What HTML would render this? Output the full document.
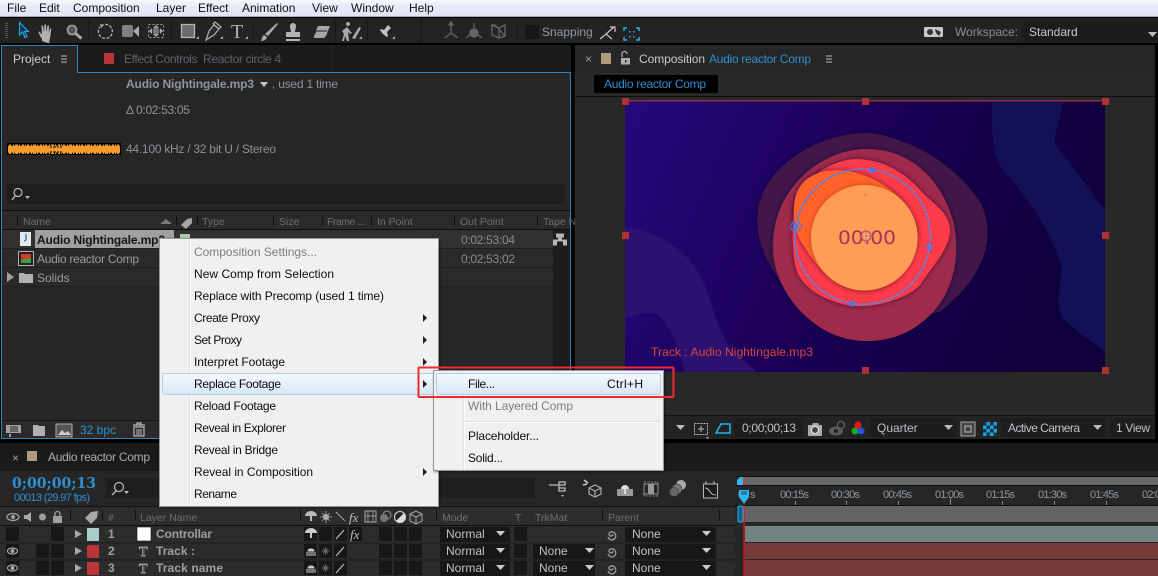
<!DOCTYPE html>
<html><head><meta charset="utf-8"><title>After Effects</title>
<style>
html,body{margin:0;padding:0;background:#000;width:1158px;height:576px;overflow:hidden}
svg{display:block}
text{font-family:"Liberation Sans",sans-serif;font-size:12px;white-space:pre}
.m{fill:#0c0c14;font-size:12px}
.d{fill:#7d7d7d}
.g{fill:#8c8c8c;font-size:11.5px}
.h{fill:#6f6f6f;font-size:10.5px}
.b{fill:#2f8fd0}
.l{fill:#bdbdbd}
.n{font-weight:bold;fill:#98a0a6;font-size:12px}
.r{fill:#8f979e;font-size:10.5px}
.ic{fill:#a8a8a8}
.st{fill:none;stroke:#a8a8a8;stroke-width:1.3}
</style></head><body>
<svg width="1158" height="576" viewBox="0 0 1158 576" xmlns="http://www.w3.org/2000/svg">
<defs>
<linearGradient id="mb" x1="0" y1="0" x2="0" y2="1"><stop offset="0" stop-color="#f8f9fc"/><stop offset=".3" stop-color="#e9ecf6"/><stop offset="1" stop-color="#dfe4f2"/></linearGradient>
<linearGradient id="bg" x1="0" y1="0" x2="1" y2=".25"><stop offset="0" stop-color="#26097c"/><stop offset=".5" stop-color="#1c0058"/><stop offset="1" stop-color="#0f003c"/></linearGradient>
<linearGradient id="hl" x1="0" y1="0" x2="0" y2="1"><stop offset="0" stop-color="#f6f9fd"/><stop offset="1" stop-color="#d6e6f7"/></linearGradient>
<filter id="s1" x="-20%" y="-20%" width="140%" height="140%"><feDropShadow dx="0" dy="0" stdDeviation="8" flood-color="#14002a" flood-opacity=".6"/></filter>
<filter id="s2" x="-20%" y="-20%" width="140%" height="140%"><feDropShadow dx="0" dy="0" stdDeviation="7" flood-color="#a02a10" flood-opacity=".6"/></filter>
<filter id="ms" x="-5%" y="-5%" width="110%" height="110%"><feDropShadow dx="1" dy="1" stdDeviation="1" flood-color="#000" flood-opacity=".5"/></filter>
</defs>

<rect width="1158" height="576" fill="#000"/>
<!-- menubar -->
<rect width="1158" height="17" fill="url(#mb)"/>
<rect y="16" width="1158" height="1" fill="#a9adbb"/>
<g fill="#101018">
<text x="7" y="12">File</text><text x="39" y="12">Edit</text><text x="73" y="12">Composition</text><text x="156" y="12">Layer</text><text x="198" y="12">Effect</text><text x="242" y="12">Animation</text><text x="312" y="12">View</text><text x="351" y="12">Window</text><text x="409" y="12">Help</text>
</g>

<!-- toolbar -->
<rect y="18" width="1158" height="25" fill="#232323"/>
<g fill="#555"><rect x="5" y="23" width="3" height="1"/><rect x="5" y="25" width="3" height="1"/><rect x="5" y="27" width="3" height="1"/><rect x="5" y="29" width="3" height="1"/><rect x="5" y="31" width="3" height="1"/><rect x="5" y="33" width="3" height="1"/><rect x="5" y="35" width="3" height="1"/><rect x="5" y="37" width="3" height="1"/></g>
<path d="M19.500 22.500V35l3-3 2.500 5.500 2-1-2.500-5h4z" fill="#12364e" stroke="#22a5e6" stroke-width="1.200"/>
<path d="M42 41v-2l-2-3-1.500-4 1-.5 2.500 3-.5-9h1.500l1 7 .5-8h1.500l.5 8 1-7h1.500l-.200 8 1.200-5h1.300l-1 8-1 5v2z" fill="#b3b3b3"/>
<circle cx="72" cy="30" r="4.500" fill="#555" stroke="#9a9a9a" stroke-width="1.800"/><path d="M75.500 33.500l6 5" stroke="#a5a5a5" stroke-width="3"/>
<path d="M101 26a7 7 0 1 1-1 1" fill="none" stroke="#aaa" stroke-width="1.400" stroke-dasharray="3 1.500"/><path d="M100 24l4 1-3 3z" fill="#aaa"/>
<rect x="122" y="25" width="11" height="12" rx="2" fill="#808080"/><path d="M133 31l6-5v11z" fill="#aaa"/>
<rect x="148.500" y="24.500" width="15" height="13" fill="none" stroke="#aaa" stroke-dasharray="2 2"/><path d="M156 25l3 3h-6zM156 37l3-3h-6zM149 31l3-3v6zM163 31l-3-3v6z" fill="#aaa"/><circle cx="156" cy="31" r="3.500" fill="#777"/>
<rect x="181.500" y="24.500" width="13" height="13" fill="#6c6c6c" stroke="#b5b5b5" stroke-width="1.300"/><path d="M196 39h3v-3z" fill="#aaa"/>
<path d="M206 40l3-9 5-6 5 4-5 6zM213 24l2-2 6 5-2 2z" fill="#2a2a2a" stroke="#b0b0b0" stroke-width="1.200"/><path d="M220 39h3v-3z" fill="#aaa"/>
<text x="231" y="38" style="font-family:'Liberation Serif',serif;font-size:20px;fill:#b0b0b0">T</text><path d="M245 39h3v-3z" fill="#aaa"/>
<path d="M261 41c3 0 5-1 6-4l-3-2c-2 1-2 4-3 6zM265 34l12-11 1 1-10 12z" fill="#a8a8a8"/>
<path d="M290 26a3 3 0 0 1 6 0c0 3-1 4-1 6h5v5h-14v-5h5c0-2-1-3-1-6zM286 39h14v2h-14z" fill="#b3b3b3"/>
<path d="M313 37l5-11h12l-4 10-2 2h-9z" fill="#a5a5a5"/><path d="M313 37l3-6h11" stroke="#232323" fill="none"/>
<circle cx="348" cy="24" r="2" fill="#aaa"/><path d="M342 41l2-7-2-3 5-4 3 4 2 2-2 1-2-2 1 9h-2l-2-5-1 5z" fill="#aaa"/><path d="M352 38l7-11 2 1-6 11z" fill="#aaa"/><path d="M359 39h3v-3z" fill="#aaa"/>
<path d="M379 40l4-6-3-4 1-1 3 1 4-5 3 3-4 4 1 4-1 1-4-3z" fill="#c2c2c2"/><path d="M392 39h3v-3z" fill="#aaa"/>
<g fill="#232323"><rect x="88" y="20" width="1" height="22" fill="#161616"/><rect x="171" y="20" width="1" height="22" fill="#161616"/><rect x="253" y="20" width="1" height="22" fill="#161616"/><rect x="335" y="20" width="1" height="22" fill="#161616"/><rect x="367" y="20" width="1" height="22" fill="#161616"/><rect x="420" y="18" width="2" height="25" fill="#1a1a1a"/><rect x="517" y="20" width="1" height="22" fill="#161616"/></g>
<g stroke="#666" fill="none" stroke-width="1.300"><path d="M451 23v10l-6 5M451 33l7 5"/><path d="M451 22l-2 3h4z" fill="#666"/><path d="M474 23v5M466 38l4-3M482 38l-4-3"/><circle cx="474" cy="33" r="4" fill="#666"/><path d="M492 25h3l10 11M492 25v10l7 3 6-2v-11l-6 3-7-3zM499 28v10"/></g>
<rect x="525" y="25" width="14" height="14" fill="#161616"/>
<text x="542" y="36" fill="#8f9aa5">Snapping</text>
<path d="M600 39l6-5 6 5M606 34l8-7M610 27h5v5" fill="none" stroke="#c8c8c8" stroke-width="1.200"/>
<path d="M624 31v-3h3M636 28h3v3M639 37v3h-3M627 40h-3v-3" fill="none" stroke="#28b0ea" stroke-width="1.500"/><g fill="#28b0ea"><rect x="629" y="31" width="1.500" height="1.500"/><rect x="633" y="31" width="1.500" height="1.500"/><rect x="629" y="36" width="1.500" height="1.500"/><rect x="633" y="36" width="1.500" height="1.500"/></g>
<rect x="924" y="27" width="19" height="10" rx="1" fill="#c8c8c8"/><circle cx="930" cy="32" r="3" fill="#333"/><path d="M935 29l6 3-2 4-3-3z" fill="#333"/>
<text x="955" y="36" fill="#8e8e8e">Workspace:</text>
<rect x="1022" y="22" width="136" height="20" fill="#1c1c1c"/>
<text x="1029" y="36" fill="#c8c8c8">Standard</text>
<path d="M1148 32h9l-4.500 5z" fill="#bbb"/>

<!-- Project panel -->
<rect x="1" y="45" width="570" height="394" fill="#262626"/>
<rect x="1" y="45" width="570" height="27" fill="#1b1b1b"/>
<rect x="331" y="45" width="1" height="27" fill="#222"/>
<rect x="2" y="45" width="76" height="28" fill="#262626"/>
<path d="M1.500 73V50.500h0V45.500H77.500V72.500H570.500V438.500H1.500V73" fill="none" stroke="#2c84ba"/>
<text x="13" y="63" fill="#c8ced4">Project</text>
<path d="M61 59h6M61 62h6M61 65h6" transform="translate(0 -3)" stroke="#c0c0c0" fill="none"/>
<rect x="104" y="53" width="10" height="11" fill="#b93538"/>
<text x="124" y="63" fill="#5e646a" textLength="157">Effect Controls  Reactor circle 4</text>
<text x="126" y="88" style="font-weight:bold;fill:#8f959c" textLength="128">Audio Nightingale.mp3</text>
<path d="M260 82h8l-4 5z" fill="#c8c8c8"/>
<text x="272" y="88" fill="#8d939a" textLength="66">, used 1 time</text>
<text x="126" y="114" fill="#8d939a" textLength="64">Δ 0:02:53:05</text>
<rect x="7" y="143" width="114" height="12" fill="#000"/>
<rect x="8" y="144.500" width="112" height="9.500" fill="#f49b2f"/>
<path d="M8 145H120M8 153.500H120" stroke="#000" stroke-width="1.500" stroke-dasharray="1 2 2 1 1 3 1 1 2 2 1 1"/>
<path d="M50 147h12M50 152h12" stroke="#000" stroke-width="1" stroke-dasharray="2 1 3 1"/>
<text x="126" y="153" fill="#8d939a" textLength="150">44.100 kHz / 32 bit U / Stereo</text>
<rect x="7" y="184" width="558" height="20" fill="#1e1e1e"/>
<circle cx="18" cy="192.500" r="4" fill="none" stroke="#bbb" stroke-width="1.200"/><path d="M15 196l-3 4" stroke="#bbb" stroke-width="1.300"/><path d="M25 196h5l-2.500 3z" fill="#bbb"/>
<rect x="2" y="210" width="568" height="1" fill="#0e0e0e"/>
<rect x="2" y="211" width="568" height="18" fill="#2a2a2a"/>
<rect x="2" y="229" width="568" height="1" fill="#0e0e0e"/>
<g fill="#111"><rect x="17" y="215" width="1" height="11"/><rect x="176" y="215" width="1" height="11"/><rect x="197" y="215" width="1" height="11"/><rect x="273" y="215" width="1" height="11"/><rect x="322" y="215" width="1" height="11"/><rect x="371" y="215" width="1" height="11"/><rect x="454" y="215" width="1" height="11"/><rect x="537" y="215" width="1" height="11"/></g>
<text x="23" y="225" class="h">Name</text><path d="M160 224l6-5 6 5z" fill="#7c7c7c"/>
<path d="M181 225l6-6 5-1v5l-6 6z" fill="#a6a6a6"/>
<text x="202" y="225" class="h">Type</text><text x="279" y="225" class="h">Size</text><text x="327" y="225" class="h" textLength="38">Frame ...</text><text x="377" y="225" class="h">In Point</text><text x="460" y="225" class="h">Out Point</text><text x="543" y="225" class="h">Tape N</text>
<rect x="2" y="230" width="568" height="18" fill="#313131"/>
<rect x="2" y="249" width="568" height="18" fill="#2a2a2a"/>
<rect x="2" y="268" width="568" height="18" fill="#2a2a2a"/>
<rect x="2" y="248" width="568" height="1" fill="#1e1e1e"/><rect x="2" y="267" width="568" height="1" fill="#1e1e1e"/><rect x="2" y="286" width="568" height="1" fill="#1e1e1e"/>
<rect x="553" y="230" width="17" height="208" fill="#1c1c1c"/>
<rect x="35" y="230" width="139" height="18" fill="#a0a0a0"/>
<rect x="20" y="232" width="11" height="14" fill="#e8e8e8"/><path d="M26 234v6l-2 1" stroke="#2487d8" stroke-width="1.500" fill="none"/>
<text x="37" y="244" style="font-weight:bold;fill:#141414" textLength="128">Audio Nightingale.mp3</text>
<rect x="18.500" y="251.500" width="15" height="14" fill="#222" stroke="#b0b0b0"/><rect x="21" y="254" width="10" height="9" fill="#3aa04a"/><path d="M21 254h10v4l-10 2z" fill="#d23b2a"/>
<text x="37" y="263" fill="#9c9c9c" textLength="102">Audio reactor Comp</text>
<path d="M7 272l7 5-7 5z" fill="#a0a0a0"/>
<path d="M19 273h5l1 1h8v9H19z" fill="#b0b0b0"/>
<text x="37" y="282" fill="#9c9c9c">Solids</text>
<rect x="180" y="234" width="10" height="10" fill="#a8cba8"/>
<text x="461" y="244" fill="#8b8b8b" textLength="54">0:02:53:04</text>
<text x="461" y="263" fill="#8b8b8b" textLength="54">0;02;53;02</text>
<path d="M559 233h5v4h-2v2h5v6h-4v-4h-6v4h-4v-6h5v-2h-2v-4z" fill="#b5b5b5" transform="translate(0 .5)"/>
<rect x="2" y="420" width="568" height="1" fill="#141414"/>
<rect x="2" y="421" width="551" height="17" fill="#2a2a2a"/>
<path d="M6 425h15v8H6zM9 434h2v3H9z" fill="#a0a0a0"/><path d="M10 427h8M10 429h8M10 431h8" stroke="#2a2a2a"/>
<path d="M33 425h5l1 1h6v10H33z" fill="#b0b0b0"/>
<rect x="56" y="424" width="16" height="13" fill="#555" stroke="#aaa"/><path d="M58 435l4-5 3 3 3-2 3 4z" fill="#ccc"/>
<text x="80" y="434" class="b">32 bpc</text>
<path d="M133 425h12M137 425v-2h4v2M134 427h10v9h-10z" fill="none" stroke="#bbb" stroke-width="1.200"/><path d="M137 429v6M139 429v6M141 429v6" stroke="#bbb"/>

<!-- Comp panel -->
<rect x="575" y="45" width="580" height="394" fill="#282828"/>
<rect x="575" y="45" width="580" height="27" fill="#262626"/>
<text x="585" y="63" fill="#9b9b9b">×</text>
<rect x="601" y="53" width="10" height="11" fill="#ad9b7b"/>
<path d="M622 57v-3a2.500 2.500 0 0 1 5 0" fill="none" stroke="#b0b0b0" stroke-width="1.300"/><rect x="621" y="58" width="9" height="6.500" fill="#b0b0b0"/><rect x="625" y="60" width="1.500" height="2.500" fill="#282828"/>
<text x="639" y="63" fill="#c6cbd0" textLength="66">Composition</text>
<text x="709" y="63" class="b" textLength="102">Audio reactor Comp</text>
<path d="M826 56h6M826 59h6M826 62h6" stroke="#c0c0c0" fill="none"/>
<rect x="594" y="75" width="124" height="18" fill="#000"/>
<text x="604" y="88" class="b" textLength="102">Audio reactor Comp</text>
<rect x="575" y="96" width="580" height="1" fill="#0c0c0c"/>

<!-- comp image -->
<rect x="625" y="101" width="480" height="271" fill="url(#bg)"/>
<g transform="translate(620 95) scale(.33333)">
<path d="M1115 18C1115 100 1115 180 1150 225C1230 320 1290 400 1325 520C1320 600 1300 650 1340 680C1380 720 1420 740 1455 770V345L1340 190C1310 160 1300 140 1305 125L1330 18Z" fill="#141056"/>
<path d="M15 395C100 410 190 450 240 540C280 620 280 690 340 770L410 830H195C175 740 130 650 90 652C60 655 35 665 15 668Z" fill="#2c1170"/>
<path d="M740 113C860 125 1000 200 1080 320C1130 420 1100 540 960 650L700 720L500 590C440 500 412 450 412 370C410 250 550 120 740 113Z" fill="#43164a" filter="url(#s1)"/>
<path d="M735 162C860 160 960 240 1000 380C1030 520 980 640 880 700C800 750 680 755 590 690C490 620 450 510 460 430C470 280 600 165 735 162Z" fill="#a02c4b" filter="url(#s1)"/>
<path d="M710 192C800 195 860 240 900 285C940 330 990 350 990 410C985 470 930 520 900 570C860 610 770 640 690 632C620 620 540 580 525 510C515 450 515 350 530 310C560 240 640 195 710 192Z" fill="#fe3a4a" filter="url(#s1)"/>
<path d="M640 226C740 222 860 290 890 400C900 480 840 585 735 587C660 590 590 520 550 450C520 410 518 350 525 310C540 250 590 228 640 226Z" fill="#ff622c" filter="url(#s1)"/>
<ellipse cx="733" cy="428" rx="160" ry="158" fill="#ff9c56" filter="url(#s2)"/>
<rect x="736" y="297" width="2" height="5" fill="#a5345a"/>
<ellipse cx="728" cy="425" rx="203" ry="203" fill="none" stroke="#5a80e2" stroke-width="4"/>
<circle cx="757" cy="225" r="9" fill="#4f78e0"/><circle cx="928" cy="456" r="9" fill="#4f78e0"/><circle cx="697" cy="626" r="9" fill="#4f78e0"/><circle cx="527" cy="395" r="9" fill="#4f78e0"/><circle cx="527" cy="395" r="15" fill="none" stroke="#4f78e0" stroke-width="3"/>
</g>
<text x="838" y="244" style="font-size:19px;fill:#a5345a;font-family:'DejaVu Sans',sans-serif" textLength="58" lengthAdjust="spacingAndGlyphs">00:00</text>
<circle cx="866" cy="236" r="5" fill="none" stroke="#b8405e"/><circle cx="866" cy="236" r="2" fill="none" stroke="#e8d8c8"/><path d="M866 228v16M858 236h16" stroke="#c87a70"/>
<text x="651" y="356" fill="#d4463c" textLength="162" lengthAdjust="spacingAndGlyphs">Track : Audio Nightingale.mp3</text>
<rect x="625" y="100" width="480" height="1.500" fill="#8c2f3c"/>
<g fill="#ae3232"><rect x="622" y="98" width="7" height="7"/><rect x="862" y="98" width="7" height="7"/><rect x="1102" y="98" width="7" height="7"/><rect x="622" y="232" width="7" height="7"/><rect x="1102" y="232" width="7" height="7"/><rect x="862" y="367" width="7" height="7"/><rect x="1102" y="367" width="7" height="7"/></g>

<!-- Comp footer -->
<rect x="575" y="415" width="580" height="1" fill="#111"/>
<rect x="575" y="416" width="580" height="23" fill="#232323"/>
<path d="M676 425h9l-4.500 5z" fill="#bbb"/>
<rect x="694.500" y="423.500" width="13" height="11" fill="none" stroke="#bbb" stroke-dasharray="2 1"/><path d="M701 426v6M698 429h6" stroke="#bbb"/><path d="M706 437h3l-1.500 2z" fill="#bbb"/>
<path d="M716 433l5-9h9v9z" fill="none" stroke="#28b0ea" stroke-width="1.500"/>
<rect x="734" y="418" width="69" height="19" fill="#1d1d1d"/>
<text x="742" y="432" fill="#bcc2c8" textLength="54">0;00;00;13</text>
<path d="M808 425h4l1-2h5l1 2h3v11h-14z" fill="#ababab"/><circle cx="815" cy="430" r="3.500" fill="#444" stroke="#eee"/>
<ellipse cx="836" cy="431" rx="7" ry="4.500" fill="#5a5a5a"/><circle cx="836" cy="431" r="2" fill="#222"/><circle cx="841" cy="425" r="3.500" fill="none" stroke="#5a5a5a" stroke-width="1.500"/>
<circle cx="858" cy="425" r="3.500" fill="#e01818"/><circle cx="855" cy="431" r="3.500" fill="#1aa81a"/><circle cx="861" cy="431" r="3.500" fill="#2a50e0"/>
<rect x="870" y="418" width="87" height="19" fill="#1d1d1d"/>
<text x="877" y="432" fill="#bcc2c8">Quarter</text><path d="M944 425h9l-4.500 5z" fill="#bbb"/>
<rect x="961" y="422" width="14" height="14" fill="#444" stroke="#aaa"/><rect x="965" y="426" width="6" height="6" fill="none" stroke="#bbb"/>
<rect x="983" y="422" width="14" height="14" fill="#1f9fd8"/><g fill="#14384a"><rect x="983" y="422" width="3.500" height="3.500"/><rect x="990" y="422" width="3.500" height="3.500"/><rect x="986.500" y="425.500" width="3.500" height="3.500"/><rect x="993.500" y="425.500" width="3.500" height="3.500"/><rect x="983" y="429" width="3.500" height="3.500"/><rect x="990" y="429" width="3.500" height="3.500"/><rect x="986.500" y="432.500" width="3.500" height="3.500"/><rect x="993.500" y="432.500" width="3.500" height="3.500"/></g>
<rect x="1001" y="418" width="104" height="19" fill="#1d1d1d"/>
<text x="1008" y="432" fill="#bcc2c8" textLength="72">Active Camera</text><path d="M1093 425h9l-4.500 5z" fill="#bbb"/>
<rect x="1110" y="418" width="43" height="19" fill="#1d1d1d"/>
<text x="1116" y="432" fill="#bcc2c8" textLength="34">1 View</text>

<!-- Timeline panel -->
<rect x="0" y="443" width="1158" height="28" fill="#1a1a1a"/>
<rect x="0" y="471" width="1158" height="105" fill="#262626"/>
<text x="12" y="462" fill="#9b9b9b">×</text>
<rect x="27" y="451" width="10" height="10" fill="#ad9b7b"/>
<text x="48" y="461" fill="#a8aeb4" textLength="102">Audio reactor Comp</text>
<text x="12" y="488" style="font-family:'DejaVu Serif',serif;font-weight:bold;font-size:15px;fill:#2f8fd0" textLength="84" lengthAdjust="spacingAndGlyphs">0;00;00;13</text>
<text x="14" y="501" class="b" style="font-size:11px" textLength="76">00013 (29.97 fps)</text>
<rect x="106" y="478" width="429" height="20" fill="#1e1e1e"/>
<circle cx="119" cy="487" r="4.500" fill="none" stroke="#bbb" stroke-width="1.200"/><path d="M116 491l-4 4" stroke="#bbb" stroke-width="1.300"/><path d="M124 491h5l-2.500 3z" fill="#bbb"/>
<path d="M549 485h6M555 485h4M559 482h6v3h-6zM559 488h6v3h-6zM559 485v6" fill="none" stroke="#bbb" stroke-width="1.300"/><path d="M561 495h3l-1.500 2z" fill="#bbb"/>
<path d="M584 480l4 3M583 485l4-1" stroke="#ccc" stroke-width="1.500"/><path d="M591 487l6-3 6 3v6l-6 3-6-3zM591 487l6 3 6-3M597 490v6" fill="none" stroke="#aaa" stroke-width="1.200" transform="translate(-2 1)"/>
<path d="M617 494v-5h4a4.500 4.500 0 0 1 8 0h4v7h-16z" fill="#999"/><path d="M621 489a4 4 0 0 1 8 0z" fill="#ddd"/><rect x="624" y="489" width="2" height="5" fill="#ddd"/>
<rect x="644" y="484" width="14" height="10" fill="none" stroke="#999"/><path d="M644 482h14v14h-14z" fill="none" stroke="#888" stroke-dasharray="2 1.500"/><rect x="648" y="484" width="6" height="10" fill="#999"/>
<circle cx="681" cy="485" r="5" fill="#aaa"/><circle cx="677" cy="489" r="5" fill="#777" stroke="#333" stroke-width=".6"/><circle cx="674" cy="492" r="4.500" fill="#666" stroke="#333" stroke-width=".6"/>
<rect x="703.500" y="484.500" width="14" height="14" fill="#1b1b1b" stroke="#bbb" transform="translate(0 -.5)"/><path d="M705 488c5 0 4 7 11 7" fill="none" stroke="#bbb"/><path d="M706 481v3M714 481v3" stroke="#bbb"/>

<!-- timeline header -->
<rect y="506" width="1158" height="1" fill="#121212"/>
<rect y="507" width="735" height="18" fill="#2d2d2d"/>
<rect y="525" width="1158" height="1" fill="#0e0e0e"/>
<g fill="#111"><rect x="70" y="510" width="1" height="11"/><rect x="102" y="510" width="1" height="11"/><rect x="135" y="510" width="1" height="11"/><rect x="300" y="510" width="1" height="11"/><rect x="436" y="510" width="1" height="11"/><rect x="602" y="510" width="1" height="11"/><rect x="719" y="510" width="1" height="11"/></g>
<ellipse cx="13" cy="517" rx="6" ry="3.500" fill="none" stroke="#a0a0a0" stroke-width="1.300"/><circle cx="13" cy="517" r="2" fill="#a0a0a0"/>
<path d="M24 515h3l4-3v10l-4-3h-3z" fill="#a8a8a8"/>
<circle cx="42.500" cy="517" r="3.500" fill="#a0a0a0"/>
<rect x="53" y="516" width="9" height="7" fill="#a0a0a0"/><path d="M55 516v-2a2.500 2.500 0 0 1 5 0v2" fill="none" stroke="#a0a0a0" stroke-width="1.300"/>
<path d="M85 518l6-6 7-1-1 7-6 6z" fill="#a8a8a8"/>
<text x="108" y="521" class="h">#</text>
<text x="140" y="521" class="h">Layer Name</text>
<path d="M305 516a6 5 0 0 1 12 0zM310 516h2v5h-2z" fill="#bdbdbd"/><circle cx="326" cy="517" r="3" fill="#bbb"/><path d="M326 511v12M320 517h12M322 513l8 8M330 513l-8 8" stroke="#aaa" stroke-width=".8"/>
<path d="M336 512l9 9" stroke="#aaa" stroke-width="1.400" stroke-dasharray="2 1"/>
<text x="349" y="522" style="font-family:'Liberation Serif',serif;font-style:italic;font-size:13px;fill:#c0c0c0">fx</text>
<rect x="365" y="511" width="11" height="11" fill="none" stroke="#aaa"/><path d="M368 511v11M373 511v11M365 516h11" stroke="#aaa" stroke-width=".8"/>
<circle cx="387" cy="515" r="4" fill="none" stroke="#999"/><circle cx="384" cy="518" r="4" fill="#777"/>
<circle cx="400" cy="517" r="5.500" fill="#222" stroke="#ddd"/><path d="M400 511.500a5.500 5.500 0 0 1 0 11z" fill="#ddd" transform="rotate(45 400 517)"/>
<path d="M410 514l6-3 6 3v7l-6 3-6-3zM410 514l6 3 6-3M416 517v7" fill="none" stroke="#aaa"/>
<text x="442" y="521" class="h">Mode</text><text x="515" y="521" class="h">T</text><text x="535" y="521" class="h">TrkMat</text><text x="608" y="521" class="h">Parent</text>

<!-- rows -->
<rect y="526" width="735" height="16.500" fill="#2c2c2c"/><rect y="543" width="735" height="16" fill="#2b2b2b"/><rect y="560" width="735" height="16" fill="#2b2b2b"/>
<rect y="542.500" width="735" height="1" fill="#1c1c1c"/><rect y="559.500" width="735" height="1" fill="#1c1c1c"/>
<g fill="#171717">
<rect x="6" y="527" width="13" height="14"/><rect x="51" y="527" width="13" height="14"/>
<rect x="6" y="544" width="13" height="14"/><rect x="36" y="544" width="13" height="14"/><rect x="51" y="544" width="13" height="14"/>
<rect x="6" y="561" width="13" height="14"/><rect x="36" y="561" width="13" height="14"/><rect x="51" y="561" width="13" height="14"/>
<rect x="304" y="527" width="13" height="14"/><rect x="319" y="527" width="13" height="14"/><rect x="334" y="527" width="13" height="14"/><rect x="349" y="527" width="13" height="14"/><rect x="379" y="527" width="13" height="14"/><rect x="394" y="527" width="13" height="14"/><rect x="409" y="527" width="13" height="14"/>
<rect x="304" y="544" width="13" height="14"/><rect x="319" y="544" width="13" height="14"/><rect x="334" y="544" width="13" height="14"/><rect x="379" y="544" width="13" height="14"/><rect x="394" y="544" width="13" height="14"/><rect x="409" y="544" width="13" height="14"/>
<rect x="304" y="561" width="13" height="14"/><rect x="319" y="561" width="13" height="14"/><rect x="334" y="561" width="13" height="14"/><rect x="379" y="561" width="13" height="14"/><rect x="394" y="561" width="13" height="14"/><rect x="409" y="561" width="13" height="14"/>
<rect x="440" y="527" width="70" height="15"/><rect x="440" y="544" width="70" height="15"/><rect x="440" y="561" width="70" height="15"/>
<rect x="514" y="527" width="13" height="14"/><rect x="514" y="544" width="13" height="14"/><rect x="514" y="561" width="13" height="14"/>
<rect x="533" y="544" width="62" height="15"/><rect x="533" y="561" width="62" height="15"/>
<rect x="625" y="527" width="91" height="15"/><rect x="625" y="544" width="91" height="15"/><rect x="625" y="561" width="91" height="15"/>
</g>
<g fill="none" stroke="#a8a8a8" stroke-width="1.200"><ellipse cx="12.500" cy="551" rx="5" ry="3"/><ellipse cx="12.500" cy="568" rx="5" ry="3"/></g><circle cx="12.500" cy="551" r="2" fill="#a8a8a8"/><circle cx="12.500" cy="568" r="2" fill="#a8a8a8"/>
<path d="M75 530l7 4-7 4zM75 547l7 4-7 4zM75 564l7 4-7 4z" fill="#a8a8a8"/>
<rect x="87" y="528" width="12" height="13" fill="#a8cdcb"/><rect x="87" y="545" width="12" height="13" fill="#b93538"/><rect x="87" y="562" width="12" height="13" fill="#b93538"/>
<text x="108" y="538" class="n">1</text><text x="108" y="555" class="n">2</text><text x="108" y="572" class="n">3</text>
<rect x="137" y="527" width="14" height="14" fill="#fff" stroke="#111" stroke-width=".6"/>
<text x="139" y="556" style="font-family:'Liberation Serif',serif;font-size:14px;fill:#2b2b2b;stroke:#aaa;stroke-width:.7">T</text>
<text x="139" y="573" style="font-family:'Liberation Serif',serif;font-size:14px;fill:#2b2b2b;stroke:#aaa;stroke-width:.7">T</text>
<text x="156" y="538" class="n" textLength="56">Controllar</text><text x="156" y="555" class="n" textLength="39">Track :</text><text x="156" y="572" class="n" textLength="67">Track name</text>
<path d="M305 533a6 5 0 0 1 12 0zM310 533h2v5h-2z" fill="#ccc"/>
<path d="M306 553h10M308 551a3 2 0 0 1 6 0zM306 555h10" stroke="#ccc" stroke-width="1" fill="#ccc"/><path d="M306 570h10M308 568a3 2 0 0 1 6 0zM306 572h10" stroke="#ccc" stroke-width="1" fill="#ccc"/>
<g stroke="#777" stroke-width=".8"><path d="M325.500 547v8M321.500 551h8M323 548.500l5 5M328 548.500l-5 5"/><path d="M325.500 564v8M321.500 568h8M323 565.500l5 5M328 565.500l-5 5"/></g>
<path d="M336 539l8-9M336 556l8-9M336 573l8-9" stroke="#b5b5b5" stroke-width="1.300"/>
<text x="350" y="539" style="font-family:'Liberation Serif',serif;font-style:italic;font-size:13px;fill:#c0c0c0">fx</text>
<g fill="#bdc3c8"><text x="446" y="538">Normal</text><text x="446" y="555">Normal</text><text x="446" y="572">Normal</text><text x="539" y="555">None</text><text x="539" y="572">None</text><text x="632" y="538">None</text><text x="632" y="555">None</text><text x="632" y="572">None</text></g>
<path d="M496 531h9l-4.500 5zM496 548h9l-4.500 5zM496 565h9l-4.500 5zM585 548h9l-4.500 5zM585 565h9l-4.500 5zM702 531h9l-4.500 5zM702 548h9l-4.500 5zM702 565h9l-4.500 5z" fill="#ccc"/>
<g fill="none" stroke="#a8a8a8" stroke-width="1.200"><path d="M613 534a2 2 0 1 1-2-2a4 4 0 1 1-3 5"/><path d="M613 551a2 2 0 1 1-2-2a4 4 0 1 1-3 5"/><path d="M613 568a2 2 0 1 1-2-2a4 4 0 1 1-3 5"/></g>

<!-- timeline right -->
<rect x="735" y="471" width="423" height="105" fill="#262626"/>
<rect x="735" y="476" width="423" height="1" fill="#111"/>
<rect x="741" y="477" width="417" height="8" fill="#666"/>
<rect x="735" y="485" width="423" height="1" fill="#0d0d0d"/>
<rect x="735" y="505" width="423" height="1" fill="#0d0d0d"/>
<g fill="#8d99a4" style="font-size:11px"><text x="738" y="498" style="font-size:11px">0</text><text x="750" y="498" style="font-size:11px">s</text>
<text x="780" y="498" style="font-size:11px" textLength="29">00:15s</text><text x="831" y="498" style="font-size:11px" textLength="29">00:30s</text><text x="883" y="498" style="font-size:11px" textLength="29">00:45s</text><text x="935" y="498" style="font-size:11px" textLength="29">01:00s</text><text x="986" y="498" style="font-size:11px" textLength="29">01:15s</text><text x="1038" y="498" style="font-size:11px" textLength="29">01:30s</text><text x="1090" y="498" style="font-size:11px" textLength="29">01:45s</text><text x="1142" y="498" style="font-size:11px" textLength="29">02:00s</text></g>
<g fill="#888"><rect x="795" y="501" width="1" height="4"/><rect x="846" y="501" width="1" height="4"/><rect x="898" y="501" width="1" height="4"/><rect x="950" y="498" width="1" height="7"/><rect x="1002" y="501" width="1" height="4"/><rect x="1054" y="501" width="1" height="4"/><rect x="1106" y="501" width="1" height="4"/></g>
<rect x="744" y="506" width="414" height="16" fill="#646464"/>
<rect x="745" y="526" width="413" height="16" fill="#728382"/>
<rect x="745" y="543" width="413" height="16" fill="#763838"/>
<rect x="745" y="560" width="413" height="16" fill="#763838"/>
<rect x="735" y="522" width="423" height="3" fill="#262626"/>
<path d="M737 485v-5l3-3h3v8z" fill="#2fb6ee"/>
<rect x="738" y="506" width="5" height="16" rx="1.500" fill="#0f5f86" stroke="#2fb6ee"/>
<path d="M739 490h10v7l-5 7-5-7z" fill="#2fb6ee"/><path d="M742 491v4M744 491v4M746 491v4" stroke="#124a66"/>
<rect x="744" y="477" width="1" height="8" fill="#e33"/>
<rect x="743.500" y="505" width="1.200" height="71" fill="#f01818"/>

<!-- main context menu -->
<g filter="url(#ms)">
<rect x="159.500" y="238.500" width="279" height="268" fill="#f0f0f0" stroke="#979797"/>
</g>
<rect x="189" y="240" width="1" height="266" fill="#e2e2e2"/><rect x="190" y="240" width="1" height="266" fill="#fff"/>
<rect x="162.500" y="373.500" width="273" height="21" rx="2" fill="url(#hl)" stroke="#aed0f2"/>
<text x="194" y="256" class="m d" textLength="123">Composition Settings...</text>
<text x="194" y="278" class="m" textLength="140">New Comp from Selection</text>
<text x="194" y="300" class="m" textLength="190">Replace with Precomp (used 1 time)</text>
<text x="194" y="322" class="m" textLength="66">Create Proxy</text>
<text x="194" y="344" class="m" textLength="48">Set Proxy</text>
<text x="194" y="366" class="m" textLength="91">Interpret Footage</text>
<text x="194" y="388" class="m" textLength="87">Replace Footage</text>
<text x="194" y="410" class="m" textLength="82">Reload Footage</text>
<text x="194" y="432" class="m" textLength="92">Reveal in Explorer</text>
<text x="194" y="454" class="m" textLength="84">Reveal in Bridge</text>
<text x="194" y="476" class="m" textLength="119">Reveal in Composition</text>
<text x="194" y="498" class="m" textLength="43">Rename</text>
<path d="M423 314l4 4-4 4zM423 336l4 4-4 4zM423 358l4 4-4 4zM423 380l4 4-4 4zM423 468l4 4-4 4z" fill="#202020"/>

<!-- sub menu -->
<g filter="url(#ms)">
<rect x="433.500" y="370.500" width="230" height="100" fill="#f0f0f0" stroke="#979797"/>
</g>
<rect x="463" y="372" width="1" height="98" fill="#e2e2e2"/><rect x="464" y="372" width="1" height="98" fill="#fff"/>
<rect x="436.500" y="373.500" width="224" height="21" rx="2" fill="url(#hl)" stroke="#aed0f2"/>
<text x="468" y="388" class="m" textLength="27">File...</text>
<text x="607" y="388" class="m" textLength="36">Ctrl+H</text>
<text x="468" y="410" class="m d" textLength="105">With Layered Comp</text>
<rect x="464" y="421" width="196" height="1" fill="#dcdcdc"/><rect x="464" y="422" width="196" height="1" fill="#fff"/>
<text x="468" y="440" class="m" textLength="71">Placeholder...</text>
<text x="468" y="462" class="m" textLength="35">Solid...</text>

<!-- red annotation -->
<rect x="418.500" y="367.500" width="255" height="29.500" fill="none" stroke="#ee2b30" stroke-width="2" rx="1"/>
</svg>
</body></html>
